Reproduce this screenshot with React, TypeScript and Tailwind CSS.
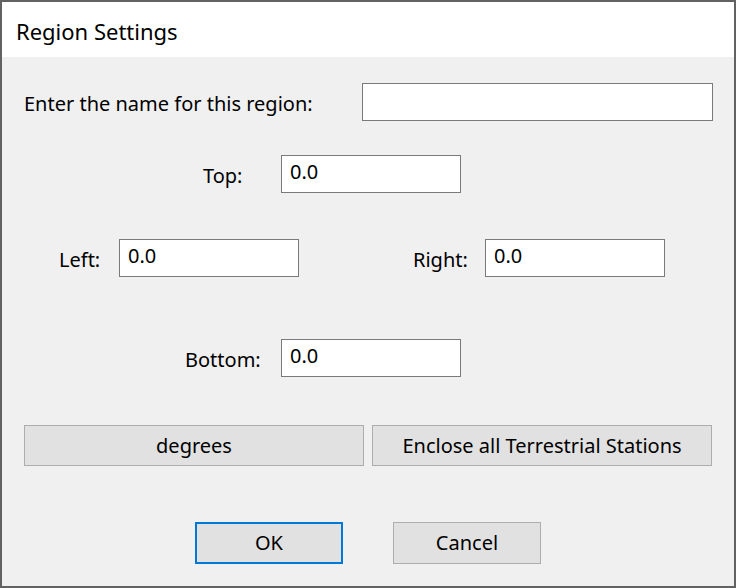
import React from 'react';

const font = { fontFamily: '"Noto Sans", "Open Sans", sans-serif' };

function Field({ value = '', width = 'w-[180px]' }: { value?: string; width?: string }) {
  return (
    <div className={`${width} h-[38px] bg-white border border-[#7a7a7a] pl-[8px] pt-[3px] text-[20px] leading-[26px] text-black`}>
      {value}
    </div>
  );
}

function Label({ text, box }: { text: string; box: string }) {
  return <div className={`${box} pt-[8px] text-[20px] leading-[26px] text-black`}>{text}</div>;
}

export default function App() {
  return (
    <div className="w-[736px] h-[588px] flex flex-col border-2 border-[#626262] bg-[#f0f0f0] text-black" style={font}>
      {/* Title bar */}
      <div className="h-[55px] bg-white flex items-center pl-[14px] pt-[3px] text-[22px]">Region Settings</div>

      {/* Body */}
      <div className="flex-1 flex flex-col">
        <div className="mt-[26px] flex items-start pl-[22px] pr-[21px]">
          <Label text="Enter the name for this region:" box="pt-[4px]" />
          <div className="ml-auto">
            <Field width="w-[351px]" />
          </div>
        </div>

        <div className="mt-[34px] flex items-start pl-[201px]">
          <Label text="Top:" box="w-[78px]" />
          <Field value="0.0" />
        </div>

        <div className="mt-[46px] flex items-start pl-[57px]">
          <Label text="Left:" box="w-[60px]" />
          <Field value="0.0" />
          <Label text="Right:" box="ml-[114px] w-[72px]" />
          <Field value="0.0" />
        </div>

        <div className="mt-[62px] flex items-start pl-[183px]">
          <Label text="Bottom:" box="w-[96px]" />
          <Field value="0.0" />
        </div>

        <div className="mt-[48px] flex gap-[8px] pl-[22px]">
          <button className="w-[340px] h-[41px] bg-[#e1e1e1] border border-[#adadad] text-[20px]">degrees</button>
          <button className="w-[340px] h-[41px] bg-[#e1e1e1] border border-[#adadad] text-[20px]">Enclose all Terrestrial Stations</button>
        </div>

        <div className="mt-[56px] flex gap-[50px] pl-[193px]">
          <button className="w-[148px] h-[42px] bg-[#e1e1e1] border-2 border-[#0078d7] text-[20px]">OK</button>
          <button className="w-[148px] h-[42px] bg-[#e1e1e1] border border-[#adadad] text-[20px]">Cancel</button>
        </div>
      </div>
    </div>
  );
}
